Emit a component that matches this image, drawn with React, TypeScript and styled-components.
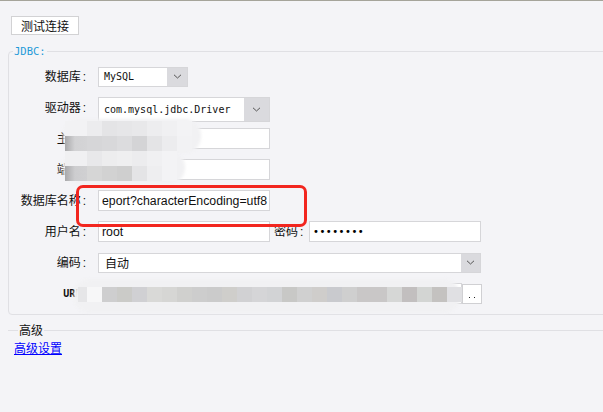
import React from 'react';
import styled, { createGlobalStyle } from 'styled-components';

const Global = createGlobalStyle`
  html, body { margin: 0; padding: 0; background: #f4f4f7; overflow: hidden; }
`;

const MONO = '"DejaVu Sans Mono", "Liberation Mono", monospace';

const Page = styled.div`
  position: relative;
  width: 603px;
  height: 412px;
  box-sizing: border-box;
  border-top: 1px solid #a5a49a;
  background: #f4f4f7;
  font-family: "Noto Sans CJK SC", "Microsoft YaHei", sans-serif;
  font-size: 12px;
  color: #111;
  overflow: hidden;
`;

const Toolbar = styled.div`
  display: flex;
  padding: 15px 0 0 11px;
`;

const TestButton = styled.button`
  width: 68px;
  height: 19px;
  box-sizing: border-box;
  border: 1px solid #d2d2d4;
  background: #fff;
  font-family: inherit;
  font-size: 12px;
  line-height: 16px;
  color: #111;
  padding: 0;
`;

const Group = styled.fieldset`
  margin: 10px 0 0 8px;
  padding: 4px 0 5px 0;
  width: 700px;
  box-sizing: border-box;
  border: 1px solid #e0e0e4;
  border-radius: 4px;
  min-inline-size: 0;
`;

const GroupLegend = styled.legend`
  margin-left: 4px;
  padding: 0 1px;
  font-family: ${MONO};
  font-size: 10.5px;
  line-height: 12px;
  color: #1f9ad8;
`;

const Row = styled.div`
  display: flex;
  align-items: center;
  height: 31px;
`;

const Label = styled.div<{ $mono?: boolean }>`
  width: 80px;
  box-sizing: border-box;
  padding-right: 3px;
  text-align: right;
  white-space: nowrap;
  margin-right: 9px;
  line-height: 16px;
  font-family: ${(p) => (p.$mono ? MONO : 'inherit')};
  font-size: ${(p) => (p.$mono ? '10px' : '12px')};
  font-weight: ${(p) => (p.$mono ? 600 : 400)};
`;

const Colon = styled.span`
  margin-left: 2px;
  font-family: "Liberation Sans", sans-serif;
  font-weight: 400;
`;

const InlineLabel = styled.div`
  width: 35px;
  margin-left: 4px;
  white-space: nowrap;
  line-height: 16px;
`;

const Input = styled.div<{ $w: number; $latin?: boolean }>`
  width: ${(p) => p.$w}px;
  height: 21px;
  box-sizing: border-box;
  border: 1px solid #d6d6d9;
  background: #fff;
  padding: 0 3px;
  display: flex;
  align-items: center;
  overflow: hidden;
  white-space: nowrap;
  font-family: ${(p) => (p.$latin ? '"Liberation Sans", Arial, sans-serif' : 'inherit')};
  font-size: ${(p) => (p.$latin ? '12.3px' : '12px')};
  color: #111;
`;

const Dots = styled.span`
  font-family: "DejaVu Sans", sans-serif;
  font-size: 10px;
  letter-spacing: 0.5px;
  color: #000;
`;

const Select = styled.div<{ $w: number; $h?: number; $shift?: number }>`
  width: ${(p) => p.$w}px;
  height: ${(p) => p.$h ?? 20}px;
  margin-top: ${(p) => p.$shift ?? 0}px;
  box-sizing: border-box;
  border: 1px solid #d6d6d9;
  background: #fff;
  display: flex;
  align-items: stretch;
`;

const SelectValue = styled.div<{ $mono?: boolean }>`
  flex: 1;
  display: flex;
  align-items: center;
  padding-left: ${(p) => (p.$mono ? 5 : 6)}px;
  white-space: nowrap;
  overflow: hidden;
  font-family: ${(p) => (p.$mono ? MONO : 'inherit')};
  font-size: ${(p) => (p.$mono ? '10px' : '12px')};
  color: #111;
`;

const Arrow = styled.div<{ $w: number }>`
  width: ${(p) => p.$w}px;
  background: #dadade;
  display: flex;
  align-items: center;
  justify-content: center;
`;

const MoreButton = styled.div`
  position: relative;
  z-index: 1;
  width: 20px;
  height: 20px;
  box-sizing: border-box;
  border: 1px solid #d0d0d3;
  background: #fff;
  display: flex;
  align-items: flex-end;
  justify-content: center;
  gap: 4px;
  padding-bottom: 5px;
`;

const Dot = styled.span`
  width: 1px;
  height: 1px;
  background: #222;
`;

const Advanced = styled.fieldset`
  margin: 7px 0 0 8px;
  padding: 0 0 0 6px;
  border: none;
  border-top: 1px solid #e0e0e4;
  min-inline-size: 0;
`;

const AdvLegend = styled.legend`
  margin-left: 4px;
  padding: 0 1px;
  line-height: 16px;
  font-size: 12px;
  color: #111;
`;

const AdvLink = styled.a`
  display: inline-block;
  margin-top: 2px;
  color: #0000ff;
  text-decoration: underline;
  font-size: 12px;
  line-height: 16px;
  cursor: pointer;
`;

const RedBox = styled.div`
  position: absolute;
  left: 76px;
  top: 184px;
  width: 231px;
  height: 42px;
  box-sizing: border-box;
  border: 3px solid #f2261f;
  border-radius: 7px;
`;

const Halo = styled.div<{ $x: number; $y: number; $w: number; $h: number; $r: number }>`
  position: absolute;
  left: ${(p) => p.$x}px;
  top: ${(p) => p.$y}px;
  width: ${(p) => p.$w}px;
  height: ${(p) => p.$h}px;
  border-radius: ${(p) => p.$r}px;
  background: #f1f1f3;
  filter: blur(1.5px);
`;

const MosaicGrid = styled.div<{ $x: number; $y: number }>`
  position: absolute;
  left: ${(p) => p.$x}px;
  top: ${(p) => p.$y}px;
  display: grid;
  grid-auto-rows: 15px;
`;

const Cell = styled.div``;

const Chevron = () => (
  <svg width="9" height="5" viewBox="0 0 9 5">
    <polyline points="1,0.8 4.5,4 8,0.8" fill="none" stroke="#555" strokeWidth="1" />
  </svg>
);

type MosaicProps = { x: number; y: number; widths: number[]; colors: string[][] };
const Mosaic = ({ x, y, widths, colors }: MosaicProps) => (
  <MosaicGrid $x={x} $y={y} style={{ gridTemplateColumns: widths.map((w) => `${w}px`).join(' ') }}>
    {colors.flatMap((row, i) =>
      row.map((c, j) => <Cell key={`${i}-${j}`} style={{ background: c }} />)
    )}
  </MosaicGrid>
);

const hostColors = [
  ['#f2f2f4', '#ececee', '#e4e4e6', '#e6e6e8', '#e8e8ea', '#ededef', '#f0f0f2', '#f3f3f5'],
  ['linear-gradient(90deg,#a9a9ab,#d2d2d4 45%,#d4d4d6)', '#d6d6d8', '#d8d8da', '#dcdcde', '#d4d4d6', '#e4e4e6', '#ececee', '#f2f2f4'],
  ['#f0f0f2', '#e8e8ea', '#ededee', '#efeff0', '#ececee', '#f0f0f2', '#f3f3f5', 'transparent'],
  ['linear-gradient(90deg,#a9a9ab,#cdcdcf 45%,#d0d0d2)', '#d6d6d6', '#d2d2d2', '#cfcfcf', '#e4e4e6', '#eeeef0', '#f3f3f5', 'transparent'],
];

const urlColors = [[
  '#e6e6e8', '#f7f7f8',
  '#cececf', '#cbcbc8', '#d0d0d3', '#d9d9d7', '#d6d6d4', '#d0d0ce', '#cdcdcd', '#cbcbcb',
  '#cfcecb', '#d1d1d3', '#d5d5d7', '#d2d3d5', '#c8c8c6', '#d0d0d0', '#cfcdcb', '#c9cace',
  '#cfcfcf', '#c9c7c7', '#c9c7c7', '#d6d7d6', '#c2bfbf', '#d3d5d3', '#c4c2c0', '#e0e0e3',
]];
const urlWidths = [9, 15, ...Array(24).fill(15)];

const L = ({ children }: { children: React.ReactNode }) => (
  <Label>
    {children}
    <Colon>:</Colon>
  </Label>
);

export default function App() {
  return (
    <Page>
      <Global />
      <Toolbar>
        <TestButton>测试连接</TestButton>
      </Toolbar>
      <Group>
        <GroupLegend>JDBC:</GroupLegend>
        <Row>
          <L>数据库</L>
          <Select $w={90}>
            <SelectValue $mono>MySQL</SelectValue>
            <Arrow $w={20}><Chevron /></Arrow>
          </Select>
        </Row>
        <Row>
          <L>驱动器</L>
          <Select $w={172} $h={25} $shift={3}>
            <SelectValue $mono>com.mysql.jdbc.Driver</SelectValue>
            <Arrow $w={25}><Chevron /></Arrow>
          </Select>
        </Row>
        <Row>
          <L>主机</L>
          <Input $w={172} />
        </Row>
        <Row>
          <L>端口</L>
          <Input $w={172} />
        </Row>
        <Row>
          <L>数据库名称</L>
          <Input $w={172} $latin>eport?characterEncoding=utf8</Input>
        </Row>
        <Row>
          <L>用户名</L>
          <Input $w={172} $latin>root</Input>
          <InlineLabel>密码<Colon>:</Colon></InlineLabel>
          <Input $w={172}><Dots>••••••••</Dots></Input>
        </Row>
        <Row>
          <L>编码</L>
          <Select $w={383}>
            <SelectValue>自动</SelectValue>
            <Arrow $w={19}><Chevron /></Arrow>
          </Select>
        </Row>
        <Row>
          <Label $mono>URL<Colon>:</Colon></Label>
          <Input $w={364} />
          <MoreButton aria-label=".."><Dot /><Dot /></MoreButton>
        </Row>
      </Group>
      <Advanced>
        <AdvLegend>高级</AdvLegend>
        <AdvLink>高级设置</AdvLink>
      </Advanced>

      <Halo $x={63} $y={118} $w={138} $h={34} $r={16} />
      <Halo $x={63} $y={150} $w={122} $h={33} $r={16} />
      <Mosaic x={65} y={120} widths={[22, 15, 15, 15, 15, 15, 15, 15]} colors={hostColors} />
      <Halo $x={74} $y={278} $w={386} $h={34} $r={16} />
      <Mosaic x={78} y={286} widths={urlWidths} colors={urlColors} />
      <RedBox />
    </Page>
  );
}
